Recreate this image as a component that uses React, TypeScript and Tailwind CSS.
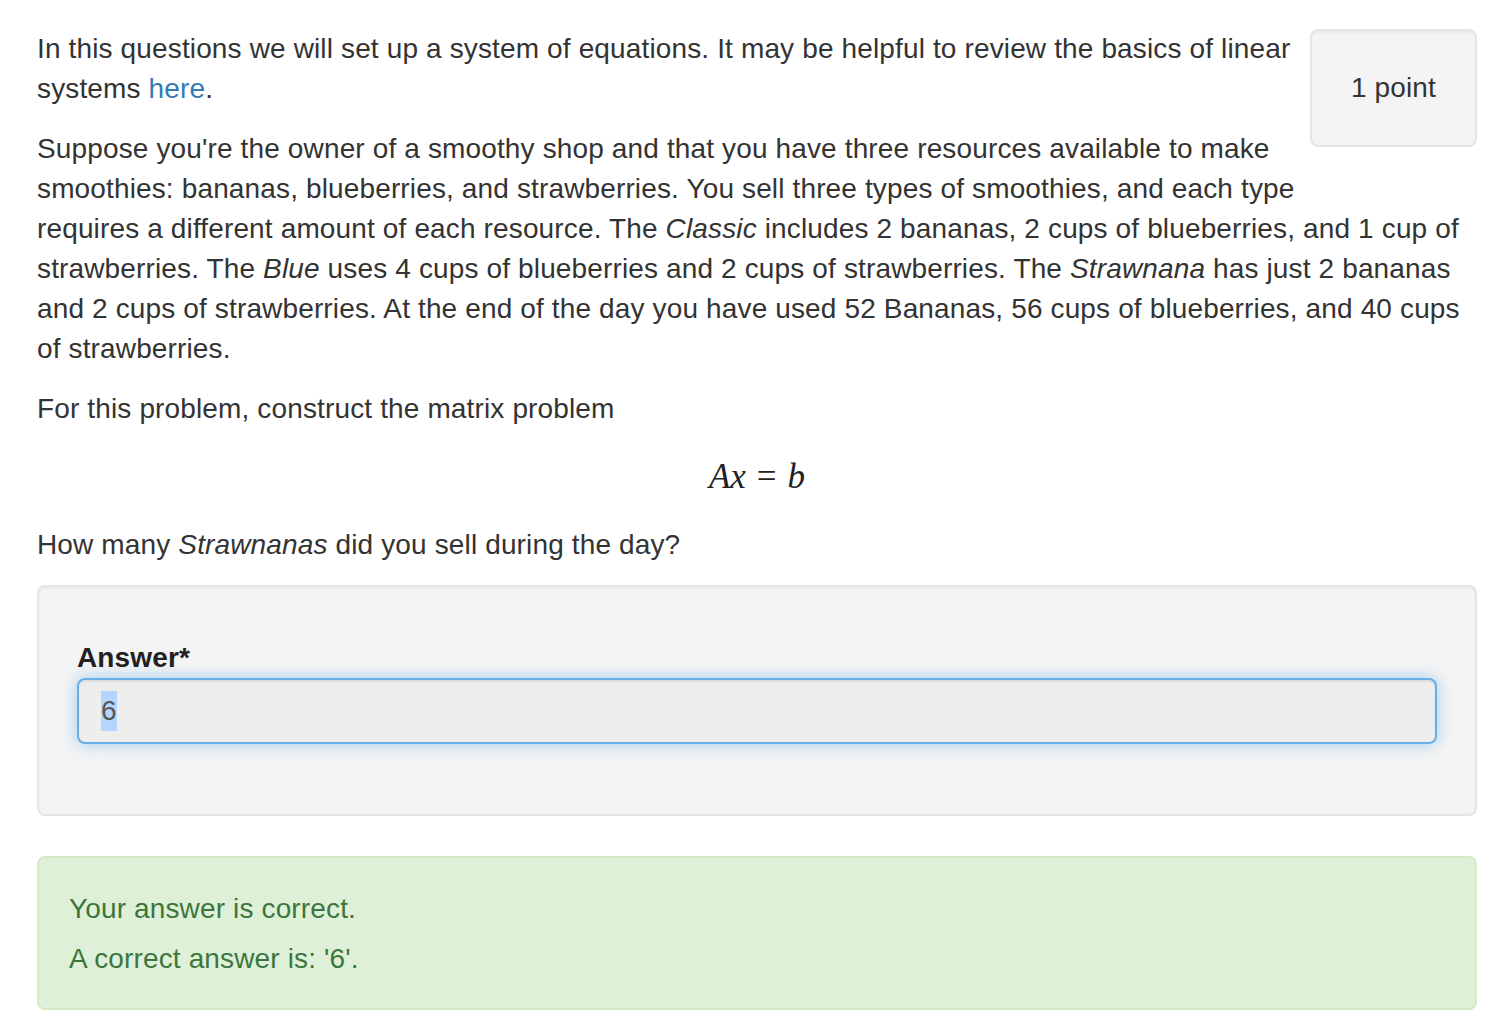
import React from 'react';

const sans = "font-['Helvetica_Neue','Liberation_Sans',Arial,sans-serif]";

const MathLine: React.FC = () => (
  <div className="my-5 flex h-[56px] items-center justify-center font-['Liberation_Serif',serif] text-[35px] tracking-normal text-[#222]">
    <span className="italic">A</span>
    <span className="italic">x</span>
    <span className="px-[11px]">=</span>
    <span className="italic">b</span>
  </div>
);

export default function App() {
  return (
    <div className={`${sans} min-h-[1012px] bg-white text-[28px] leading-[40px] tracking-[0.14px] text-[#333]`}>
      <div className="ml-[37px] w-[1440px] pt-[29px]">
        <div className="float-right mb-[40px] ml-[8px] rounded-[8px] border-2 border-[#e5e5e5] bg-[#f4f4f4] px-[39px] py-[37px] shadow-[inset_0_2px_2px_rgba(0,0,0,0.04)]">
          1 point
        </div>

        <p className="mb-5">
          In this questions we will set up a system of equations. It may be helpful to review the basics of linear systems{' '}
          <a className="text-[#337ab7]" href="#">here</a>.
        </p>

        <p className="mb-5">
          Suppose you're the owner of a smoothy shop and that you have three resources available to make smoothies: bananas,
          blueberries, and strawberries. You sell three types of smoothies, and each type requires a different amount of each
          resource. The <em>Classic</em> includes 2 bananas, 2 cups of blueberries, and 1 cup of strawberries. The{' '}
          <em>Blue</em> uses 4 cups of blueberries and 2 cups of strawberries. The <em>Strawnana</em> has just 2 bananas and 2
          cups of strawberries. At the end of the day you have used 52 Bananas, 56 cups of blueberries, and 40 cups of
          strawberries.
        </p>

        <p>For this problem, construct the matrix problem</p>

        <MathLine />

        <p className="mb-5">
          How many <em>Strawnanas</em> did you sell during the day?
        </p>

        <div className="rounded-[8px] border-2 border-[#e5e5e5] bg-[#f4f4f4] px-[38px] pb-[70px] pt-[51px] shadow-[inset_0_2px_2px_rgba(0,0,0,0.04)]">
          <div className="font-bold text-[#222]">Answer*</div>
          <div className="flex h-[66px] items-center rounded-[8px] border-2 border-[#66afe9] bg-[#eeeeee] px-[22px] text-[#555] shadow-[inset_0_2px_2px_rgba(0,0,0,0.075),0_0_16px_rgba(102,175,233,0.6)]">
            <span className="bg-[#b4d5fe]">6</span>
          </div>
        </div>

        <div className="mt-[40px] rounded-[8px] border-2 border-[#d6e9c6] bg-[#dff0d8] px-[30px] pb-[29px] pt-[31px] text-[#3c763d]">
          <p className="mb-[10px]">Your answer is correct.</p>
          <p>A correct answer is: '6'.</p>
        </div>
      </div>
    </div>
  );
}
